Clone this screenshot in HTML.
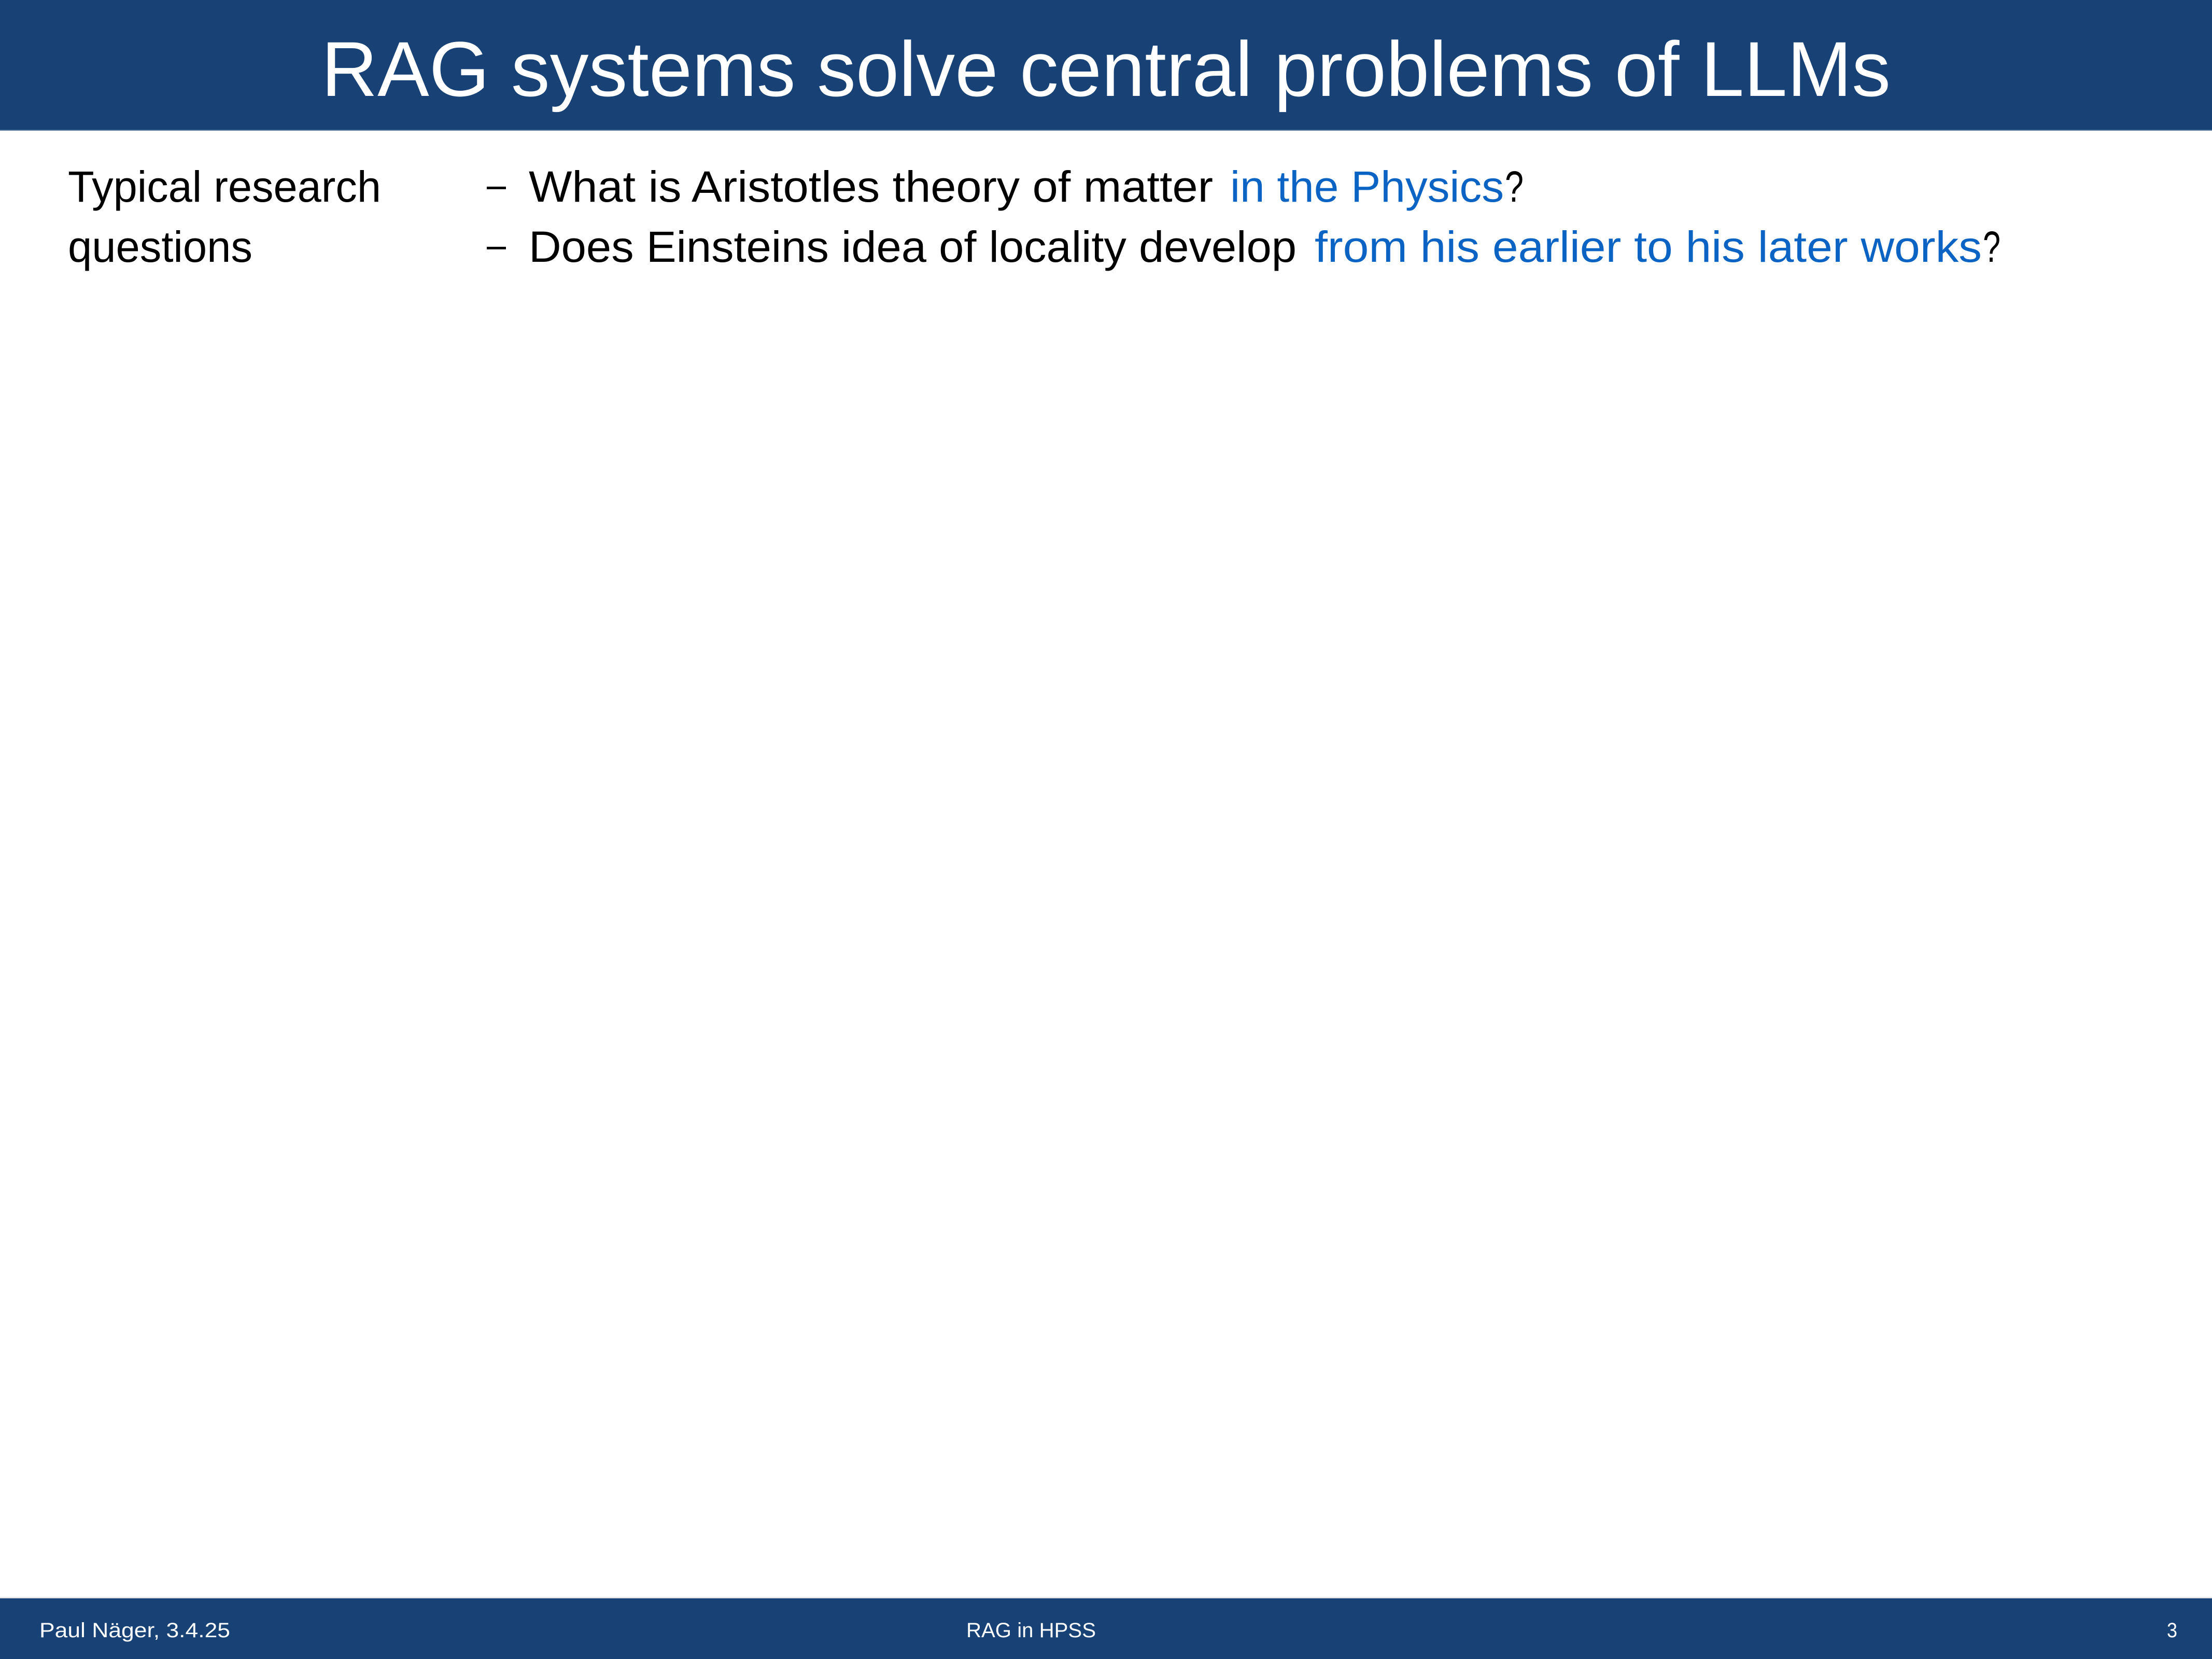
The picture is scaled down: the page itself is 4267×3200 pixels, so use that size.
<!DOCTYPE html>
<html><head><meta charset="utf-8"><style>
html,body{margin:0;padding:0;background:#fff;}
svg{display:block;}
text{font-family:"Liberation Sans",sans-serif;}
</style></head><body>
<svg width="4267" height="3200" viewBox="0 0 4267 3200" xmlns="http://www.w3.org/2000/svg">
<rect x="0" y="0" width="4267" height="3200" fill="#fff"/>
<rect x="0" y="0" width="4267" height="250" fill="#184276"/>
<rect x="0" y="250" width="4267" height="2" fill="#4d6c96"/>
<text x="620" y="185" font-size="150" fill="#fff" textLength="3027" lengthAdjust="spacingAndGlyphs">RAG systems solve central problems of LLMs</text>

<g font-size="84" fill="#000">
<text x="131" y="389" textLength="604" lengthAdjust="spacingAndGlyphs">Typical research</text>
<text x="131" y="505" textLength="356" lengthAdjust="spacingAndGlyphs">questions</text>
<rect x="939" y="360" width="37" height="5" fill="#000"/>
<rect x="939" y="476" width="37" height="5" fill="#000"/>
<text x="1020" y="389" textLength="1320" lengthAdjust="spacingAndGlyphs">What is Aristotles theory of matter</text>
<text x="2373" y="389" fill="#0b63c4" textLength="528" lengthAdjust="spacingAndGlyphs">in the Physics</text>
<text x="2903" y="389" textLength="36" lengthAdjust="spacingAndGlyphs">?</text>
<text x="1020" y="505" textLength="1481" lengthAdjust="spacingAndGlyphs">Does Einsteins idea of locality develop</text>
<text x="2536" y="505" fill="#0b63c4" textLength="1287" lengthAdjust="spacingAndGlyphs">from his earlier to his later works</text>
<text x="3825" y="505" textLength="34" lengthAdjust="spacingAndGlyphs">?</text>
</g>

<rect x="0" y="3080" width="4267" height="3" fill="#e6e6e6"/>
<rect x="0" y="3083" width="4267" height="117" fill="#184276"/>
<g font-size="40" fill="#fff">
<text x="76" y="3158" textLength="368" lengthAdjust="spacingAndGlyphs">Paul Näger, 3.4.25</text>
<text x="1864" y="3158" textLength="250" lengthAdjust="spacingAndGlyphs">RAG in HPSS</text>
<text x="4180" y="3158" textLength="20" lengthAdjust="spacingAndGlyphs">3</text>
</g>
</svg>
</body></html>
